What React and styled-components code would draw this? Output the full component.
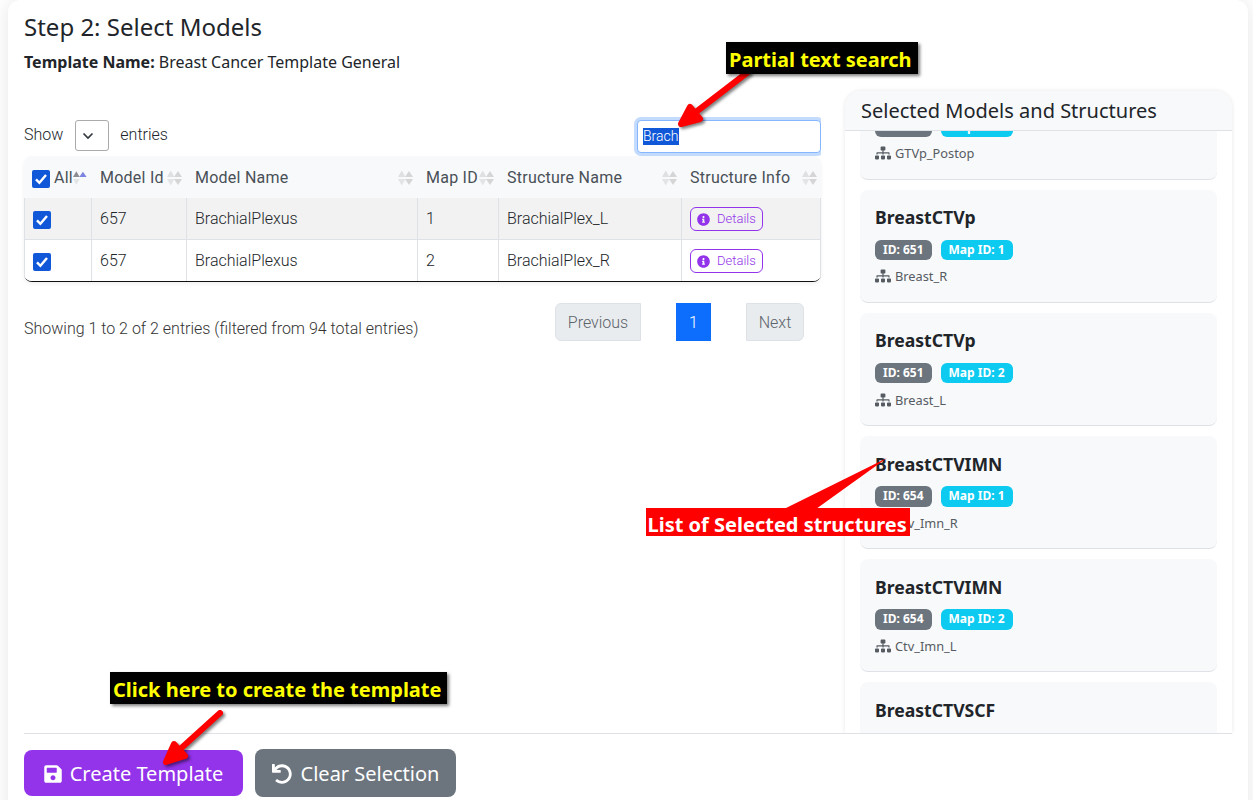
import React from "react";
import styled, { createGlobalStyle } from "styled-components";
import { FaSave, FaUndo, FaSitemap, FaInfoCircle } from "react-icons/fa";

const GlobalStyle = createGlobalStyle`
  *, *::before, *::after { box-sizing: border-box; }
  body {
    margin: 0;
    background: #fff;
    color: #212529;
    font: 400 16px/1.5 "Noto Sans", sans-serif;
  }
`;

const Page = styled.div`
  position: relative;
  height: 800px;
  padding: 0 5px 0 8px;
  overflow: hidden;
`;

const Sheet = styled.main`
  display: flex;
  flex-direction: column;
  height: 830px;
  padding: 10px 16px 0;
  background: #fff;
  border-radius: 12px;
  box-shadow: 0 0 20px rgba(0, 0, 0, 0.1);
`;

const StepTitle = styled.h4`
  margin: 0;
  font-size: 24px;
  font-weight: 400;
  line-height: 33px;
`;

const TemplateName = styled.p`
  margin: 7px 0 0;
  line-height: 24px;
`;

const Columns = styled.div`
  display: grid;
  grid-template-columns: 797px 387px;
  justify-content: space-between;
  height: 642px;
  margin-top: 17px;
`;

const TableArea = styled.section`
  padding-top: 28px;
  font-family: Roboto, sans-serif;
  font-weight: 300;
`;

const Controls = styled.div`
  display: flex;
  justify-content: space-between;
  height: 37px;
`;

const LengthControl = styled.div`
  display: flex;
  align-items: center;
  height: 31px;
  gap: 11.5px;
`;

const LengthSelect = styled.div`
  display: flex;
  align-items: center;
  width: 34px;
  height: 31px;
  margin-top: 2px;
  padding-left: 6px;
  border: 1px solid #aaa;
  border-radius: 3px;
`;

const SearchBox = styled.div`
  display: flex;
  align-items: center;
  width: 184px;
  height: 33px;
  margin-top: 1px;
  padding-left: 5px;
  border: 1px solid #86b7fe;
  border-radius: 4px;
  background: #fff;
  box-shadow: 0 0 0 3px rgba(13, 110, 253, 0.25);
  clip-path: inset(-4px 0 -4px -4px);
  font-size: 14px;
`;

const Highlight = styled.span`
  height: 17px;
  padding-right: 1px;
  background: #1158d9;
  color: #fff;
  line-height: 17px;
`;

const Table = styled.div`
  height: 126px;
  border-bottom: 1px solid #111;
  border-radius: 8px;
  overflow: hidden;
  box-shadow: 0 2px 4px rgba(0, 0, 0, 0.06);
`;

const Row = styled.div`
  display: grid;
  grid-template-columns: 67px 95px 231px 81px 183px 140px;
  height: ${(p) => (p.$head ? 42 : 41)}px;
  background: ${(p) => (p.$head ? "#f8f9fb" : p.$odd ? "#f2f2f2" : "#fff")};
`;

const BodyRow = styled(Row)`
  height: ${(p) => (p.$odd ? 42 : 41)}px;
  border-bottom: ${(p) => (p.$odd ? "1px solid #dee2e6" : "none")};
`;

const HeadCell = styled.div`
  display: flex;
  align-items: center;
  justify-content: space-between;
  padding: 1px 4.5px 0 ${(p) => (p.$first ? 8 : 9)}px;
  color: #495057;
  white-space: nowrap;
`;

const HeadText = styled.span`
  display: flex;
  align-items: center;
  gap: 4px;
  font-weight: 400;
  letter-spacing: 0.24px;
`;

const Cell = styled.div`
  display: flex;
  align-items: center;
  padding-left: 8px;
  border-left: 1px solid #dee2e6;
  &:last-child { border-right: 1px solid #dee2e6; }
`;

const CheckBox = styled.span`
  display: inline-flex;
  flex: none;
  width: 18px;
  height: 18px;
  margin-top: 3px;
  border-radius: 2px;
  background: #1158d9;
`;

const DetailsButton = styled.span`
  display: flex;
  align-items: center;
  gap: 7px;
  width: 73px;
  height: 24px;
  margin-top: 1px;
  padding-left: 6px;
  border: 1px solid #9333ea;
  border-radius: 6px;
  color: #9333ea;
  font-size: 13px;
`;

const TableFooter = styled.div`
  display: flex;
  justify-content: space-between;
  padding: 21px 17px 0 0;
`;

const Info = styled.div`
  padding-top: 14px;
  color: #333;
`;

const Pager = styled.div`
  display: flex;
  gap: 35px;
`;

const PageButton = styled.span`
  display: flex;
  align-items: center;
  justify-content: center;
  width: ${(p) => p.$w}px;
  height: 38px;
  padding-top: 2px;
  border: 1px solid ${(p) => (p.$active ? "#0d6efd" : "#dee2e6")};
  border-radius: ${(p) => p.$radius || "0"};
  background: ${(p) => (p.$active ? "#0d6efd" : "#e9ecef")};
  color: ${(p) => (p.$active ? "#fff" : "#5c636a")};
`;

const Panel = styled.aside`
  display: flex;
  flex-direction: column;
  height: 642px;
  border-radius: 16px 16px 0 0;
  background: #fff;
  box-shadow: 0 0 4px rgba(0, 0, 0, 0.1);
  overflow: hidden;
`;

const PanelTitle = styled.h5`
  flex: none;
  height: 40px;
  margin: 0;
  padding-left: 16px;
  border-bottom: 1px solid #dee2e6;
  background: #f8f9fb;
  font-size: 20px;
  font-weight: 400;
  line-height: 40px;
`;

const PanelBody = styled.div`
  flex: 1;
  min-height: 0;
  padding: 0 15px;
  overflow: hidden;
`;

const ModelList = styled.div`
  display: grid;
  grid-auto-rows: 113px;
  gap: 10.1px;
  margin-top: -64px;
`;

const ModelCard = styled.article`
  padding: 14.250px 15px 0;
  border-bottom: 1px solid #dee2e6;
  border-radius: 8px;
  background: #f8f9fb;
`;

const ModelName = styled.div`
  font-size: 17.6px;
  font-weight: 700;
  line-height: 26px;
`;

const Badges = styled.div`
  display: flex;
  gap: 9px;
  margin-top: 9.500px;
`;

const Badge = styled.span`
  height: 20.5px;
  padding: 0 8px;
  border-radius: 6px;
  background: ${(p) => (p.$map ? "#0dcaf0" : "#6c757d")};
  color: #fff;
  font-size: 12px;
  font-weight: 700;
  line-height: 20.5px;
`;

const Structure = styled.div`
  display: flex;
  align-items: center;
  gap: 4px;
  margin-top: 6.100px;
  color: #565c62;
  font-size: 12.8px;
  line-height: 20px;
`;

const ActionBar = styled.footer`
  display: flex;
  align-items: center;
  gap: 12px;
  height: 79px;
  border-top: 1px solid #dee2e6;
  background: #fff;
`;

const ActionButton = styled.span`
  display: flex;
  align-items: center;
  justify-content: center;
  gap: ${(p) => (p.$primary ? 7 : 9)}px;
  width: ${(p) => (p.$primary ? 219 : 201)}px;
  height: ${(p) => (p.$primary ? 46 : 48)}px;
  padding: 1px ${(p) => (p.$primary ? 1 : 0)}px 0 0;
  border-radius: 8px;
  background: ${(p) => (p.$primary ? "#9333ea" : "#6c757d")};
  color: #fff;
  font-size: 20px;
`;

const Callout = styled.div`
  position: absolute;
  left: ${(p) => p.$x}px;
  top: ${(p) => p.$y}px;
  width: ${(p) => p.$w}px;
  height: ${(p) => (p.$red ? 28 : 32)}px;
  padding-left: ${(p) => (p.$red ? 1.5 : 3)}px;
  background: ${(p) => (p.$red ? "#f00" : "#000")};
  color: ${(p) => (p.$red ? "#fff" : "#ff0")};
  box-shadow: ${(p) => (p.$red ? "none" : "2px 2px 3px rgba(0, 0, 0, 0.5)")};
  font-size: 20px;
  font-weight: 700;
  line-height: ${(p) => (p.$red ? 33 : 36)}px;
  white-space: nowrap;
`;

const Marks = styled.svg`
  position: absolute;
  inset: 0;
  pointer-events: none;
`;

const Arrow = styled.g`
  filter: drop-shadow(2px 2px 1.5px rgba(0, 0, 0, 0.5));
`;

const Tick = () => (
  <CheckBox>
    <svg width="18" height="18" viewBox="0 0 18 18" fill="none">
      <path d="M4 9.3l3.4 3.5L14 5" stroke="#fff" strokeWidth="2.4" />
    </svg>
  </CheckBox>
);

const SortIcon = ({ active }) => (
  <svg width="15" height="16" viewBox="0 0 15 16">
    <path d="M0 7L3.7 0.5L7.4 7z" fill={active ? "#8b8d91" : "#dfe0e2"} />
    <path d="M0 9L3.7 15.5L7.4 9z" fill="#e3e4e6" />
    <path d="M7 7L11 1L15 7z" fill={active ? "#7d83e0" : "#d5d5d6"} />
    {!active && <path d="M7 9L11 15L15 9z" fill="#d5d5d6" />}
  </svg>
);

const headings = ["Model Id", "Model Name", "Map ID", "Structure Name", "Structure Info"];

const rows = [
  ["657", "BrachialPlexus", "1", "BrachialPlex_L"],
  ["657", "BrachialPlexus", "2", "BrachialPlex_R"],
];

const models = [
  { name: "GTVp", id: "650", map: "1", structure: "GTVp_Postop" },
  { name: "BreastCTVp", id: "651", map: "1", structure: "Breast_R" },
  { name: "BreastCTVp", id: "651", map: "2", structure: "Breast_L" },
  { name: "BreastCTVIMN", id: "654", map: "1", structure: "Ctv_Imn_R" },
  { name: "BreastCTVIMN", id: "654", map: "2", structure: "Ctv_Imn_L" },
  { name: "BreastCTVSCF" },
];

export default function App() {
  return (
    <Page>
      <GlobalStyle />
      <Sheet>
        <StepTitle>Step 2: Select Models</StepTitle>
        <TemplateName>
          <strong>Template Name:</strong> Breast Cancer Template General
        </TemplateName>
        <Columns>
          <TableArea>
            <Controls>
              <LengthControl>
                <span>Show</span>
                <LengthSelect>
                  <svg width="12" height="12" viewBox="0 0 12 12" fill="none">
                    <path d="M1.5 3.5L6 8l4.500-4.500" stroke="#343a40" strokeWidth="1.7" />
                  </svg>
                </LengthSelect>
                <span>entries</span>
              </LengthControl>
              <SearchBox>
                <Highlight>Brach</Highlight>
              </SearchBox>
            </Controls>
            <Table>
              <Row $head>
                <HeadCell $first>
                  <HeadText><Tick />All</HeadText>
                  <SortIcon active />
                </HeadCell>
                {headings.map((h) => (
                  <HeadCell key={h}>
                    <HeadText>{h}</HeadText>
                    <SortIcon />
                  </HeadCell>
                ))}
              </Row>
              {rows.map((r, i) => (
                <BodyRow key={r[3]} $odd={i === 0}>
                  <Cell><Tick /></Cell>
                  {r.map((c, j) => <Cell key={j}>{c}</Cell>)}
                  <Cell>
                    <DetailsButton><FaInfoCircle size={13} />Details</DetailsButton>
                  </Cell>
                </BodyRow>
              ))}
            </Table>
            <TableFooter>
              <Info>Showing 1 to 2 of 2 entries (filtered from 94 total entries)</Info>
              <Pager>
                <PageButton $w={86} $radius="6px 0 0 6px">Previous</PageButton>
                <PageButton $w={35} $active>1</PageButton>
                <PageButton $w={58} $radius="0 6px 6px 0">Next</PageButton>
              </Pager>
            </TableFooter>
          </TableArea>
          <Panel>
            <PanelTitle>Selected Models and Structures</PanelTitle>
            <PanelBody>
              <ModelList>
                {models.map(({ name, id, map, structure }, i) => (
                  <ModelCard key={i}>
                    <ModelName>{name}</ModelName>
                    {id && (
                      <Badges>
                        <Badge>ID: {id}</Badge>
                        <Badge $map>Map ID: {map}</Badge>
                      </Badges>
                    )}
                    {structure && (
                      <Structure><FaSitemap size={16} />{structure}</Structure>
                    )}
                  </ModelCard>
                ))}
              </ModelList>
            </PanelBody>
          </Panel>
        </Columns>
        <ActionBar>
          <ActionButton $primary><FaSave size={20} />Create Template</ActionButton>
          <ActionButton><FaUndo size={20} />Clear Selection</ActionButton>
        </ActionBar>
      </Sheet>
      <Marks width="1253" height="800" viewBox="0 0 1253 800">
        <Arrow fill="#f00" stroke="#f00" strokeLinejoin="round" strokeLinecap="round">
          <path d="M748 72L692 115" strokeWidth="6" />
          <path d="M681 124L690 107L700 119z" strokeWidth="6" />
        </Arrow>
        <Arrow fill="#f00" stroke="#f00" strokeLinejoin="round" strokeLinecap="round">
          <path d="M220 713L178 751" strokeWidth="6" />
          <path d="M166 762L174 744L185 756z" strokeWidth="6" />
        </Arrow>
        <path d="M784 509L887 458L816 509z" fill="#f00" />
      </Marks>
      <Callout $x={726} $y={42} $w={192}>Partial text search</Callout>
      <Callout $x={646} $y={508} $w={264} $red>List of Selected structures</Callout>
      <Callout $x={110} $y={672} $w={337}>Click here to create the template</Callout>
    </Page>
  );
}
